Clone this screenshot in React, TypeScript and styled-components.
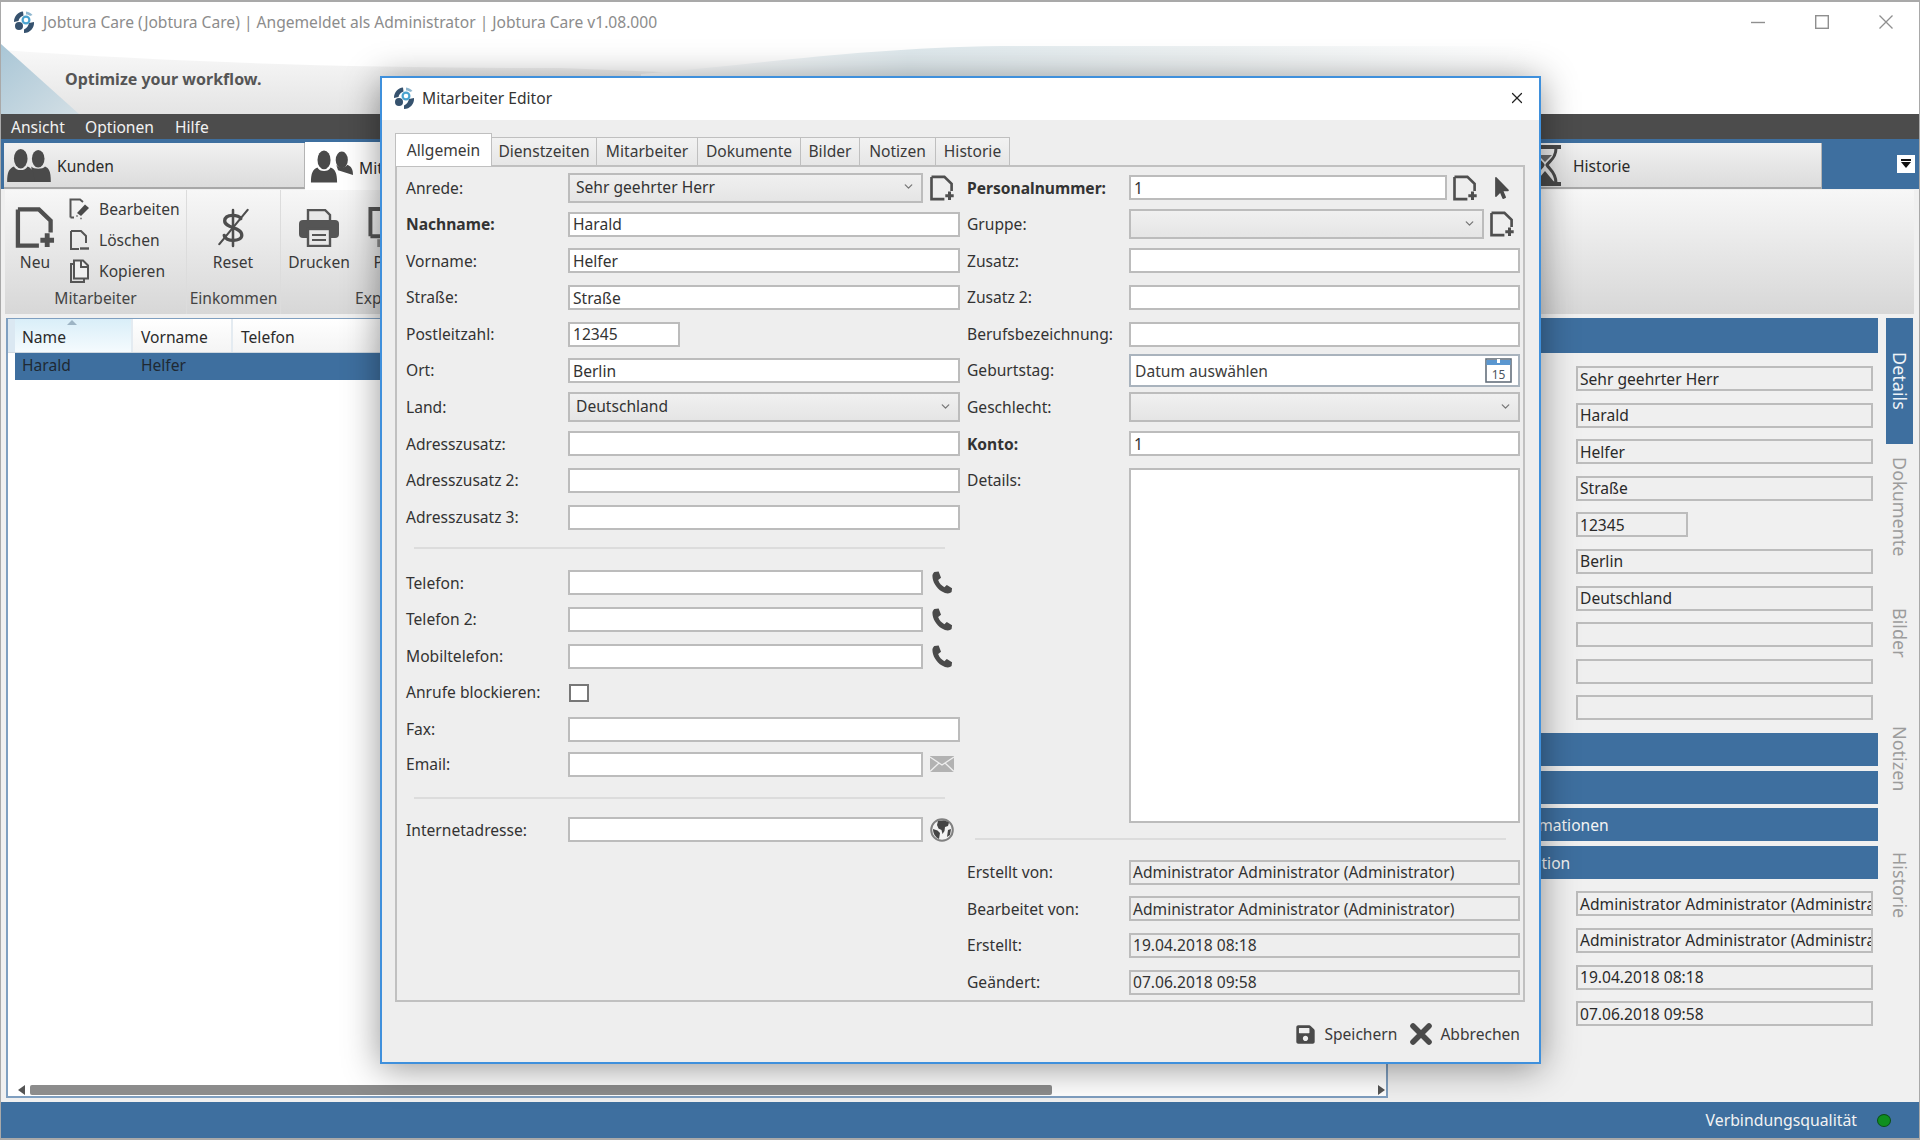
import React from 'react';
import styled, { createGlobalStyle } from 'styled-components';
import { ChevronDown, X } from 'lucide-react';
import { FaSave, FaMousePointer } from 'react-icons/fa';

const BLUE = '#3e6f9f';
const FONT = '"Noto Sans", "Open Sans", sans-serif';

const GlobalStyles = createGlobalStyle`
  html, body { margin: 0; padding: 0; background: #f0f0f0; }
  * { box-sizing: border-box; }
  #root { width: 1920px; height: 1140px; }
`;

const Page = styled.div`
  position: relative;
  width: 1920px;
  height: 1140px;
  overflow: hidden;
  display: flex;
  flex-direction: column;
  background: #f0f0f0;
  border: 1px solid #a9a9a9;
  border-top-width: 2px;
  border-bottom-width: 2px;
  font-family: ${FONT};
  font-size: 15.6px;
  color: #2a2a2a;
`;

/* header */
const Header = styled.header`
  position: relative;
  height: 112px;
  flex: none;
  background: #fff;
`;
const HeaderArt = styled.svg`
  position: absolute;
  inset: 0;
`;
const TitleRow = styled.div`
  position: relative;
  height: 40px;
  display: flex;
  align-items: center;
  padding-left: 11px;
`;
const AppTitle = styled.span`
  margin-left: 7px;
  font-size: 15.6px;
  color: #8c8c8c;
`;
const WindowControls = styled.div`
  margin-left: auto;
  display: flex;
  align-items: center;
  gap: 50px;
  padding-right: 26px;
  color: #8f8f8f;
`;
const Tagline = styled.div`
  position: relative;
  margin: 26px 0 0 64px;
  font-size: 16px;
  font-weight: 700;
  color: #555;
`;

const MenuBar = styled.nav`
  height: 25px;
  flex: none;
  display: flex;
  align-items: center;
  padding-left: 10px;
  background: #4c4c4c;
  color: #f2f2f2;
`;
const MenuItem = styled.span<{ $w: number }>`
  width: ${p => p.$w}px;
`;

/* module tabs */
const ModuleBar = styled.div`
  height: 50px;
  flex: none;
  display: flex;
  padding: 4px 0 0 3px;
  background: ${BLUE};
`;
const ModuleTab = styled.div<{ $active?: boolean; $w?: number; $pad: number; $gap?: number }>`
  width: ${p => (p.$w ? `${p.$w}px` : 'auto')};
  flex: ${p => (p.$w ? 'none' : 1)};
  display: flex;
  align-items: center;
  gap: ${p => p.$gap || 6}px;
  padding-left: ${p => p.$pad}px;
  background: ${p => (p.$active ? '#fff' : 'linear-gradient(#f1f1f1, #dcdcdc)')};
  border-bottom: ${p => (p.$active ? '0' : '2px solid #a8a8a8')};
  border-right: 1px solid #b4b4b4;
  margin-top: ${p => (p.$active ? '-1px' : 0)};
  height: ${p => (p.$active ? '49px' : 'auto')};
`;
const ModuleName = styled.span`
  padding-top: 2px;
`;
const ModuleBlock = styled.div`
  width: 97px;
  flex: none;
  display: flex;
  justify-content: flex-end;
  padding: 12px 4px 0 0;
`;
const FilterButton = styled.div`
  width: 18px;
  height: 18px;
  background: #fff;
  display: flex;
  flex-direction: column;
  align-items: center;
  padding-top: 4px;
`;
const FilterBar = styled.span`
  width: 10px;
  height: 2px;
  background: #111;
  margin-bottom: 1px;
`;
const FilterArrow = styled.span`
  width: 0;
  height: 0;
  border-left: 5.5px solid transparent;
  border-right: 5.5px solid transparent;
  border-top: 6px solid #111;
`;

/* ribbon */
const RibbonWrap = styled.div`
  height: 129px;
  flex: none;
  padding: 1px 5px 4px 4px;
`;
const Ribbon = styled.div`
  height: 100%;
  display: flex;
  background: linear-gradient(#f7f7f7, #d7d7d7);
`;
const RibbonGroup = styled.div<{ $w: number }>`
  width: ${p => p.$w}px;
  flex: none;
  display: flex;
  flex-direction: column;
  border-right: 1px solid #dcdcdc;
`;
const GroupBody = styled.div<{ $pad: number }>`
  height: 91px;
  flex: none;
  display: flex;
  padding-left: ${p => p.$pad}px;
`;
const GroupLabel = styled.div<{ $left?: number }>`
  flex: 1;
  display: flex;
  align-items: center;
  justify-content: ${p => (p.$left ? 'flex-start' : 'center')};
  padding-left: ${p => p.$left || 0}px;
  color: #444;
  white-space: nowrap;
`;
const BigButton = styled.div<{ $w: number }>`
  width: ${p => p.$w}px;
  height: 91px;
  flex: none;
  padding-top: 17px;
  display: flex;
  flex-direction: column;
  align-items: center;
  color: #4a4a4a;
  white-space: nowrap;
`;
const BigIcon = styled.div`
  height: 41px;
  display: flex;
  align-items: center;
  margin-bottom: 4px;
`;
const ButtonText = styled.span`
  color: #3a3a3a;
  line-height: 20px;
`;
const SmallStack = styled.div`
  display: flex;
  flex-direction: column;
  padding-top: 3px;
  margin-left: 14px;
`;
const SmallButton = styled.div`
  height: 31px;
  flex: none;
  display: flex;
  align-items: center;
  gap: 9px;
  color: #4a4a4a;
`;

/* main area */
const Main = styled.main`
  flex: 1;
  min-height: 0;
  display: flex;
  padding: 0 5px 4px 5px;
`;
const TableBox = styled.section`
  width: 1382px;
  flex: none;
  display: flex;
  flex-direction: column;
  background: #fff;
  border: 1px solid #7f9fc0;
  border-width: 1px 2px 2px 2px;
`;
const TableHead = styled.div`
  height: 34px;
  flex: none;
  display: flex;
  border-bottom: 1px solid #cfd8e0;
`;
const RowGutter = styled.div`
  width: 7px;
  flex: none;
  background: #dbe8f2;
`;
const HeadCell = styled.div<{ $w?: number; $sorted?: boolean; $pad: number }>`
  position: relative;
  width: ${p => (p.$w ? `${p.$w}px` : 'auto')};
  flex: ${p => (p.$w ? 'none' : 1)};
  display: flex;
  align-items: center;
  padding: 2px 0 0 ${p => p.$pad}px;
  background: ${p => (p.$sorted ? 'linear-gradient(#d9eef8, #f5fbfe)' : 'linear-gradient(#fff, #f4f4f4)')};
  border-right: ${p => (p.$w ? '2px solid #e4ebf1' : '0')};
`;
const SortCaret = styled.span`
  position: absolute;
  top: 1px;
  left: 52px;
  width: 0;
  height: 0;
  border-left: 5px solid transparent;
  border-right: 5px solid transparent;
  border-bottom: 5px solid #9db4c4;
`;
const SelectedRow = styled.div`
  height: 27px;
  flex: none;
  margin-left: 7px;
  padding-bottom: 3px;
  display: flex;
  align-items: center;
  background: ${BLUE};
  color: #1f2933;
`;
const RowCell = styled.span<{ $w: number; $pad: number }>`
  width: ${p => p.$w}px;
  padding-left: ${p => p.$pad}px;
`;
const TableFill = styled.div`
  flex: 1;
`;
const ScrollBar = styled.div`
  height: 10px;
  flex: none;
  margin-bottom: 1px;
  display: flex;
  align-items: center;
  padding: 0 1px 0 10px;
`;
const ScrollArrow = styled.span<{ $right?: boolean }>`
  width: 0;
  height: 0;
  border-top: 5px solid transparent;
  border-bottom: 5px solid transparent;
  ${p => (p.$right ? 'border-left: 7px solid #555; margin-left: auto;' : 'border-right: 7px solid #555;')}
`;
const ScrollThumb = styled.span`
  width: 1022px;
  height: 10px;
  margin-left: 5px;
  border-radius: 2px;
  background: #8c8c8c;
`;

const DetailPanel = styled.aside`
  flex: 1;
  min-width: 0;
  display: flex;
  padding-left: 5px;
`;
const Accordion = styled.div`
  width: 485px;
  flex: none;
  display: flex;
  flex-direction: column;
`;
const AccBar = styled.div<{ $h?: number; $mt?: number; $pad?: number }>`
  height: ${p => p.$h || 33}px;
  flex: none;
  margin-top: ${p => p.$mt || 0}px;
  padding-left: ${p => p.$pad || 8}px;
  display: flex;
  align-items: center;
  background: ${BLUE};
  color: #f4f4f4;
`;
const ReadStack = styled.div<{ $mt: number; $mb: number }>`
  margin: ${p => p.$mt}px 5px ${p => p.$mb}px 183px;
  display: flex;
  flex-direction: column;
  gap: 11.6px;
`;
const ReadField = styled.div<{ $w?: number }>`
  width: ${p => (p.$w ? `${p.$w}px` : '100%')};
  height: 25px;
  flex: none;
  display: flex;
  align-items: center;
  padding-left: 2px;
  overflow: hidden;
  white-space: nowrap;
  background: #efefef;
  border: 2px solid #bcbcbc;
`;
const SideTabs = styled.div`
  width: 27px;
  flex: none;
  margin-left: 8px;
  display: flex;
  flex-direction: column;
`;
const SideTab = styled.div<{ $active?: boolean }>`
  height: 126px;
  flex: none;
  display: flex;
  align-items: center;
  justify-content: center;
  writing-mode: vertical-rl;
  font-size: 18px;
  color: ${p => (p.$active ? '#eef3f7' : '#9c9c9c')};
  background: ${p => (p.$active ? BLUE : 'transparent')};
`;

const StatusBar = styled.footer`
  height: 36px;
  flex: none;
  display: flex;
  align-items: center;
  justify-content: flex-end;
  gap: 20px;
  padding-right: 28px;
  background: ${BLUE};
  color: #f3f3f3;
  font-size: 15.8px;
`;
const StatusDot = styled.span`
  width: 14px;
  height: 13px;
  border-radius: 50%;
  background: #0f8f1f;
  border: 1px solid #0b4f16;
`;

/* dialog */
const Dialog = styled.div`
  position: absolute;
  left: 379px;
  top: 74px;
  width: 1161px;
  height: 988px;
  display: flex;
  flex-direction: column;
  background: #eee;
  border: 2px solid #3f90dc;
  box-shadow: 0 4px 34px rgba(0, 0, 0, 0.42);
`;
const DialogTitle = styled.div`
  height: 42px;
  flex: none;
  display: flex;
  align-items: center;
  padding: 0 13px 2px 10px;
  background: #fff;
  color: #333;
`;
const DialogName = styled.span`
  margin-left: 6px;
  flex: 1;
`;
const DialogBody = styled.div`
  flex: 1;
  display: flex;
  flex-direction: column;
  padding: 13px 14px 0 13px;
`;
const TabStrip = styled.div`
  height: 33px;
  flex: none;
  display: flex;
  align-items: flex-end;
  position: relative;
  z-index: 1;
`;
const Tab = styled.div<{ $w: number; $active?: boolean }>`
  width: ${p => p.$w}px;
  height: ${p => (p.$active ? 33 : 29)}px;
  flex: none;
  display: flex;
  align-items: center;
  justify-content: center;
  padding-bottom: 1px;
  color: #3a3a3a;
  white-space: nowrap;
  background: ${p => (p.$active ? '#fff' : 'linear-gradient(#f2f2f2, #e6e6e6)')};
  border: 1.5px solid #bfbfbf;
  border-left-width: ${p => (p.$active ? '1.5px' : '0')};
  border-bottom: ${p => (p.$active ? '0' : '1.5px solid #bfbfbf')};
`;
const FormPanel = styled.div`
  height: 837px;
  flex: none;
  margin-top: -1px;
  display: grid;
  grid-template-columns: 561px 553px;
  padding: 2.5px 0 0 9px;
  background: #eee;
  border: 2px solid #c0c0c0;
`;
const FormColumn = styled.div`
  display: flex;
  flex-direction: column;
`;
const Row = styled.div<{ $h?: number; $top?: boolean }>`
  height: ${p => p.$h || 36.6}px;
  flex: none;
  display: flex;
  align-items: ${p => (p.$top ? 'flex-start' : 'center')};
`;
const Label = styled.label<{ $bold?: boolean }>`
  width: 162px;
  flex: none;
  line-height: 36.6px;
  font-weight: ${p => (p.$bold ? 700 : 400)};
  color: #333;
  white-space: nowrap;
`;
const Input = styled.div<{ $w: number }>`
  width: ${p => p.$w}px;
  height: 25px;
  flex: none;
  display: flex;
  align-items: center;
  padding-left: 3px;
  background: #fff;
  border: 2px solid #bcbcbc;
  color: #333;
`;
const Combo = styled.div<{ $w: number }>`
  width: ${p => p.$w}px;
  height: 30px;
  flex: none;
  display: flex;
  align-items: center;
  justify-content: space-between;
  padding: 0 6px 2px 6px;
  background: linear-gradient(#f0f0f0, #e5e5e5);
  border: 2px solid #bcbcbc;
  color: #333;
`;
const DateBox = styled.div<{ $w: number }>`
  width: ${p => p.$w}px;
  height: 33px;
  flex: none;
  display: flex;
  align-items: center;
  justify-content: space-between;
  padding: 0 6px 0 4px;
  background: #fff;
  border: 2px solid #a9b3bd;
  color: #3c3c3c;
`;
const TextArea = styled.div`
  width: 391px;
  height: 355px;
  margin-top: 5.5px;
  background: #fff;
  border: 2px solid #bcbcbc;
`;
const CheckBox = styled.div`
  width: 20px;
  height: 18px;
  margin-left: 1px;
  background: #fff;
  border: 2px solid #777;
`;
const Divider = styled.div<{ $mt: number; $mb: number }>`
  width: 531px;
  height: 2px;
  flex: none;
  margin: ${p => p.$mt}px 0 ${p => p.$mb}px 8px;
  background: #dcdcdc;
`;
const TrailIcon = styled.span<{ $ml: number; $color?: string }>`
  display: flex;
  margin-left: ${p => p.$ml}px;
  color: ${p => p.$color || '#4a4a4a'};
`;
const ReadOnly = styled.div`
  width: 391px;
  height: 25px;
  flex: none;
  display: flex;
  align-items: center;
  padding-left: 2px;
  background: #eee;
  border: 2px solid #bcbcbc;
  color: #333;
`;
const DialogActions = styled.div`
  flex: 1;
  display: flex;
  align-items: center;
  justify-content: flex-end;
  gap: 13px;
  padding: 4px 5px 0 0;
`;
const ActionButton = styled.div`
  display: flex;
  align-items: center;
  gap: 8px;
  color: #3a3a3a;
`;

/* drawn icons */
const Logo = ({ size = 24 }: { size?: number }) => (
  <svg width={size} height={size} viewBox="0 0 24 24">
    <path d="M2 12 C2 6 6 2 11 1.5 L11.5 5.5 C8.5 6.5 7 8.5 6.5 11 Z" fill="#36526e" />
    <circle cx="7" cy="16" r="4" fill="#36526e" />
    <path d="M22 12 C22.5 18 18 23 12 23 L12 19.5 C15 18 16.5 15.5 17 13 Z" fill="#36526e" />
    <path d="M14 1.5 C17 2 19 3 20.5 5 L18 6 C17 5 16 4.5 14 4.5 Z" fill="#8fb7cf" />
    <circle cx="14" cy="10" r="3.4" fill="none" stroke="#4aa3cf" strokeWidth="2.2" />
  </svg>
);

const NewDoc = ({ w, h }: { w: number; h: number }) => (
  <svg width={w} height={h} viewBox="0 0 40 42" fill="none" stroke="#4f4f4f">
    <path d="M2.5 2.5 H24 L36 14 V26 M2.5 2.5 V39.5 H24" strokeWidth="4.4" />
    <path d="M32.5 27 V41 M25.5 34 H39.5" strokeWidth="5" />
  </svg>
);

const EditDoc = () => (
  <svg width="21" height="22" viewBox="0 0 21 22" fill="none">
    <path d="M1.5 19.5 V1.5 H11 L14 4" stroke="#555" strokeWidth="2" />
    <path d="M1.5 19.5 H5" stroke="#555" strokeWidth="2" />
    <path d="M8 15 L16 6.5 L20 10 L12 18 Z" fill="#4a4a4a" />
    <path d="M7 18 h2 M11 20.5 h2" stroke="#888" strokeWidth="1.5" />
  </svg>
);

const DeleteDoc = () => (
  <svg width="21" height="22" viewBox="0 0 21 22" fill="none">
    <path d="M2 2 H12 L17 7 V14 M2 2 V20 H10" stroke="#555" strokeWidth="2" />
    <path d="M11 19.5 H20" stroke="#555" strokeWidth="2.4" />
  </svg>
);

const CopyDoc = () => (
  <svg width="21" height="24" viewBox="0 0 21 24" fill="none" stroke="#555" strokeWidth="2">
    <path d="M4.5 5 H2 V23 H15 V20" />
    <path d="M5 1.5 H14 L19 6.5 V19.5 H5 Z" fill="#f0f0f0" />
    <path d="M12 2 V8 H18" />
  </svg>
);

const DollarOff = () => (
  <svg width="32" height="41" viewBox="0 0 32 42" fill="none" stroke="#4d4d4d" strokeLinecap="round">
    <path d="M24 12 C23 8 8 6 7.5 14 C7 22 25 20 25 29 C25 36 8 36 7 29" strokeWidth="3.4" />
    <path d="M16 3 V40" strokeWidth="2.6" />
    <path d="M31 3 L2 38" strokeWidth="2.2" />
  </svg>
);

const Printer = () => (
  <svg width="40" height="38" viewBox="0 0 40 38">
    <path d="M9 1 H26 L31 6 V13 H9 Z" fill="#e8e8e8" stroke="#555" strokeWidth="2.4" />
    <rect x="0" y="11" width="40" height="18" rx="4" fill="#555" />
    <rect x="9" y="20" width="22" height="17" fill="#e8e8e8" stroke="#555" strokeWidth="2.4" />
    <path d="M13 26 H27 M13 31 H27" stroke="#555" strokeWidth="2" />
  </svg>
);

const PageP = () => (
  <svg width="40" height="41" viewBox="0 0 40 42" fill="none">
    <path d="M2 30 V2 H38 V30 H2" stroke="#555" strokeWidth="4" />
    <rect x="9" y="33" width="12" height="8" fill="#8a8a8a" />
  </svg>
);

const People = ({ w, h, even }: { w: number; h: number; even?: boolean }) => (
  <svg width={w} height={h} viewBox="0 0 46 34" fill="#4a4a4a">
    <ellipse cx={even ? 33 : 34} cy="10" rx="6.5" ry="9" />
    <path d={even ? 'M26 18 C28 21 38 21 40 18 C44 20 46 22 46 34 H26 Z' : 'M28 15 C30 19 38 19 40 15 C44 17 46 19 46 26 L30 21 Z'} />
    <ellipse cx="15" cy="10" rx="7" ry="10" />
    <path d="M8 18 C10 23 20 23 22 18 C27 20 29 24 29 34 H1 C1 24 3 20 8 18 Z" />
  </svg>
);

const Hourglass = () => (
  <svg width="34" height="41" viewBox="0 0 34 41" fill="none">
    <path d="M1 2 H33 M1 39 H33" stroke="#4a4a4a" strokeWidth="4" />
    <path d="M6 3 C6 14 13 16 15 20 C13 24 6 27 6 38 H28 C28 27 21 24 19 20 C21 16 28 14 28 3" stroke="#4a4a4a" strokeWidth="3" />
    <path d="M17 26 L27 38 H7 Z" fill="#4a4a4a" />
    <path d="M10 10 H24 L17 17 Z" fill="#6a6a6a" />
  </svg>
);

const CalendarIcon = () => (
  <svg width="27" height="25" viewBox="0 0 27 25">
    <rect x="1" y="1" width="25" height="23" fill="#fff" stroke="#64707c" strokeWidth="1.6" />
    <rect x="1.5" y="2" width="24" height="5" fill="#5b97d0" />
    <rect x="12" y="1" width="3" height="4" fill="#fff" />
    <text x="13.5" y="20.5" textAnchor="middle" fontSize="12" fontFamily="Noto Sans" fill="#4a5560">15</text>
  </svg>
);

const PhoneIcon = () => (
  <svg width="22" height="23" viewBox="0 0 22 24" fill="#4a4a4a">
    <path d="M3 1 L7.5 0.5 L10 7 L7 9.5 C8 12.5 10.5 15.5 13.5 17 L16 14.5 L21.5 18 L21 22 C19 24 15 24 11 21.5 C5 18 1 11 1 5 C1 3.5 2 2 3 1 Z" />
  </svg>
);

const MailIcon = () => (
  <svg width="24" height="16" viewBox="0 0 24 16">
    <rect width="24" height="16" fill="#b2b2b2" />
    <path d="M0 1 L12 9 L24 1 M0 15.5 L9 7 M24 15.5 L15 7" fill="none" stroke="#eee" strokeWidth="1.3" />
  </svg>
);

const GlobeIcon = () => (
  <svg width="24" height="24" viewBox="0 0 24 24">
    <circle cx="12" cy="12" r="10.8" fill="#f2f2f2" stroke="#808080" strokeWidth="2" />
    <path d="M8 3 C11 2 16 2 19 4.5 L18 8 L15 9 L14.5 13 L12.5 16 L11.5 12 L8.5 10.5 L7 7 Z" fill="#444" />
    <path d="M3 11 L7.5 12.5 L10 15 L9 21 C5.5 19.5 3 15.5 3 11 Z" fill="#444" />
    <path d="M18 12 L21 11 L20 17 L17 19 Z" fill="#444" />
  </svg>
);

const CancelIcon = () => (
  <svg width="22" height="22" viewBox="0 0 22 22">
    <path d="M3 3 L19 19 M19 3 L3 19" stroke="#4a4a4a" strokeWidth="5.6" strokeLinecap="round" />
  </svg>
);

const HeaderDecoration = () => (
  <HeaderArt width="1918" height="112" viewBox="0 0 1918 112">
    <defs>
      <linearGradient id="sweep" x1="0" y1="0" x2="0" y2="1">
        <stop offset="0" stopColor="#f8f8f8" />
        <stop offset="1" stopColor="#e4e4e4" />
      </linearGradient>
      <linearGradient id="teal" x1="0" y1="0" x2="1" y2="0">
        <stop offset="0" stopColor="#fff" />
        <stop offset="0.3" stopColor="#dfe9ed" />
        <stop offset="0.65" stopColor="#eef2f3" />
        <stop offset="1" stopColor="#fff" />
      </linearGradient>
      <linearGradient id="tri" x1="0" y1="0" x2="1" y2="1">
        <stop offset="0" stopColor="#a9c6d6" />
        <stop offset="1" stopColor="#d3dfe5" />
      </linearGradient>
    </defs>
    <path d="M0 48 C200 62 380 66 560 66 L760 74 L760 112 L0 112 Z" fill="url(#sweep)" />
    <path d="M640 72 C760 62 860 46 1000 44 L1530 44 L1530 80 L640 80 Z" fill="url(#teal)" />
    <path d="M0 42 L78 112 L0 112 Z" fill="url(#tri)" />
  </HeaderArt>
);

const Chevron = () => <ChevronDown size={13} strokeWidth={2.4} color="#777" />;

const PhoneRow = ({ label }: { label: string }) => (
  <Row>
    <Label>{label}</Label>
    <Input $w={355} />
    <TrailIcon $ml={8}><PhoneIcon /></TrailIcon>
  </Row>
);

const TextRow = ({ label, value, bold }: { label: string; value?: string; bold?: boolean }) => (
  <Row>
    <Label $bold={bold}>{label}</Label>
    <Input $w={392}>{value}</Input>
  </Row>
);

const RightTextRow = ({ label, value, bold }: { label: string; value?: string; bold?: boolean }) => (
  <Row>
    <Label $bold={bold}>{label}</Label>
    <Input $w={391}>{value}</Input>
  </Row>
);

const InfoRow = ({ label, value }: { label: string; value: string }) => (
  <Row>
    <Label>{label}</Label>
    <ReadOnly>{value}</ReadOnly>
  </Row>
);

export default function App() {
  return (
    <Page>
      <GlobalStyles />
      <Header>
        <HeaderDecoration />
        <TitleRow>
          <Logo />
          <AppTitle>Jobtura Care (Jobtura Care) | Angemeldet als Administrator | Jobtura Care v1.08.000</AppTitle>
          <WindowControls>
            <svg width="14" height="14" viewBox="0 0 14 14"><path d="M0 7.5 H14" stroke="currentColor" strokeWidth="1.4" /></svg>
            <svg width="14" height="14" viewBox="0 0 14 14" fill="none"><rect x="0.7" y="0.7" width="12.6" height="12.6" stroke="currentColor" strokeWidth="1.4" /></svg>
            <svg width="14" height="14" viewBox="0 0 14 14"><path d="M0.5 0.5 L13.5 13.5 M13.5 0.5 L0.5 13.5" stroke="currentColor" strokeWidth="1.3" /></svg>
          </WindowControls>
        </TitleRow>
        <Tagline>Optimize your workflow.</Tagline>
      </Header>

      <MenuBar>
        <MenuItem $w={74}>Ansicht</MenuItem>
        <MenuItem $w={90}>Optionen</MenuItem>
        <MenuItem $w={50}>Hilfe</MenuItem>
      </MenuBar>

      <ModuleBar>
        <ModuleTab $w={301} $pad={2}>
          <People w={45} h={33} even />
          <ModuleName>Kunden</ModuleName>
        </ModuleTab>
        <ModuleTab $w={303} $pad={5} $active>
          <People w={43} h={33} />
          <ModuleName>Mitarbeiter</ModuleName>
        </ModuleTab>
        <ModuleTab $pad={0} />
        <ModuleTab $w={303} $pad={9} $gap={11}>
          <Hourglass />
          <ModuleName>Historie</ModuleName>
        </ModuleTab>
        <ModuleBlock>
          <FilterButton>
            <FilterBar />
            <FilterArrow />
          </FilterButton>
        </ModuleBlock>
      </ModuleBar>

      <RibbonWrap>
        <Ribbon>
          <RibbonGroup $w={182}>
            <GroupBody $pad={10}>
              <BigButton $w={40}>
                <BigIcon><NewDoc w={40} h={41} /></BigIcon>
                <ButtonText>Neu</ButtonText>
              </BigButton>
              <SmallStack>
                <SmallButton><EditDoc /><ButtonText>Bearbeiten</ButtonText></SmallButton>
                <SmallButton><DeleteDoc /><ButtonText>Löschen</ButtonText></SmallButton>
                <SmallButton><CopyDoc /><ButtonText>Kopieren</ButtonText></SmallButton>
              </SmallStack>
            </GroupBody>
            <GroupLabel>Mitarbeiter</GroupLabel>
          </RibbonGroup>
          <RibbonGroup $w={94}>
            <GroupBody $pad={0}>
              <BigButton $w={92}>
                <BigIcon><DollarOff /></BigIcon>
                <ButtonText>Reset</ButtonText>
              </BigButton>
            </GroupBody>
            <GroupLabel>Einkommen</GroupLabel>
          </RibbonGroup>
          <RibbonGroup $w={200}>
            <GroupBody $pad={0}>
              <BigButton $w={76}>
                <BigIcon><Printer /></BigIcon>
                <ButtonText>Drucken</ButtonText>
              </BigButton>
              <BigButton $w={62}>
                <BigIcon><PageP /></BigIcon>
                <ButtonText>PDF</ButtonText>
              </BigButton>
            </GroupBody>
            <GroupLabel $left={74}>Export</GroupLabel>
          </RibbonGroup>
        </Ribbon>
      </RibbonWrap>

      <Main>
        <TableBox>
          <TableHead>
            <RowGutter />
            <HeadCell $w={118} $pad={7} $sorted>
              <SortCaret />
              Name
            </HeadCell>
            <HeadCell $w={100} $pad={8}>Vorname</HeadCell>
            <HeadCell $pad={8}>Telefon</HeadCell>
          </TableHead>
          <SelectedRow>
            <RowCell $w={118} $pad={7}>Harald</RowCell>
            <RowCell $w={100} $pad={8}>Helfer</RowCell>
          </SelectedRow>
          <TableFill />
          <ScrollBar>
            <ScrollArrow />
            <ScrollThumb />
            <ScrollArrow $right />
          </ScrollBar>
        </TableBox>

        <DetailPanel>
          <Accordion>
            <AccBar $h={35} />
            <ReadStack $mt={13} $mb={13}>
              <ReadField>Sehr geehrter Herr</ReadField>
              <ReadField>Harald</ReadField>
              <ReadField>Helfer</ReadField>
              <ReadField>Straße</ReadField>
              <ReadField $w={112}>12345</ReadField>
              <ReadField>Berlin</ReadField>
              <ReadField>Deutschland</ReadField>
              <ReadField />
              <ReadField />
              <ReadField />
            </ReadStack>
            <AccBar />
            <AccBar $mt={5} />
            <AccBar $mt={4} $pad={109}>Informationen</AccBar>
            <AccBar $mt={5} $pad={89}>Information</AccBar>
            <ReadStack $mt={12} $mb={0}>
              <ReadField>Administrator Administrator (Administrator)</ReadField>
              <ReadField>Administrator Administrator (Administrator)</ReadField>
              <ReadField>19.04.2018 08:18</ReadField>
              <ReadField>07.06.2018 09:58</ReadField>
            </ReadStack>
          </Accordion>
          <SideTabs>
            <SideTab $active>Details</SideTab>
            <SideTab>Dokumente</SideTab>
            <SideTab>Bilder</SideTab>
            <SideTab>Notizen</SideTab>
            <SideTab>Historie</SideTab>
          </SideTabs>
        </DetailPanel>
      </Main>

      <StatusBar>
        <span>Verbindungsqualität</span>
        <StatusDot />
      </StatusBar>

      <Dialog>
        <DialogTitle>
          <Logo />
          <DialogName>Mitarbeiter Editor</DialogName>
          <X size={18} strokeWidth={1.6} color="#222" />
        </DialogTitle>
        <DialogBody>
          <TabStrip>
            <Tab $w={97} $active>Allgemein</Tab>
            <Tab $w={105}>Dienstzeiten</Tab>
            <Tab $w={101}>Mitarbeiter</Tab>
            <Tab $w={103}>Dokumente</Tab>
            <Tab $w={59}>Bilder</Tab>
            <Tab $w={76}>Notizen</Tab>
            <Tab $w={74}>Historie</Tab>
          </TabStrip>
          <FormPanel>
            <FormColumn>
              <Row>
                <Label>Anrede:</Label>
                <Combo $w={355}>Sehr geehrter Herr<Chevron /></Combo>
                <TrailIcon $ml={7}><NewDoc w={24} h={26} /></TrailIcon>
              </Row>
              <TextRow label="Nachname:" value="Harald" bold />
              <TextRow label="Vorname:" value="Helfer" />
              <TextRow label="Straße:" value="Straße" />
              <Row>
                <Label>Postleitzahl:</Label>
                <Input $w={112}>12345</Input>
              </Row>
              <TextRow label="Ort:" value="Berlin" />
              <Row>
                <Label>Land:</Label>
                <Combo $w={392}>Deutschland<Chevron /></Combo>
              </Row>
              <TextRow label="Adresszusatz:" />
              <TextRow label="Adresszusatz 2:" />
              <TextRow label="Adresszusatz 3:" />
              <Divider $mt={11.5} $mb={15.7} />
              <PhoneRow label="Telefon:" />
              <PhoneRow label="Telefon 2:" />
              <PhoneRow label="Mobiltelefon:" />
              <Row>
                <Label>Anrufe blockieren:</Label>
                <CheckBox />
              </Row>
              <TextRow label="Fax:" />
              <Row $h={33}>
                <Label>Email:</Label>
                <Input $w={355} />
                <TrailIcon $ml={7}><MailIcon /></TrailIcon>
              </Row>
              <Divider $mt={16} $mb={13} />
              <Row>
                <Label>Internetadresse:</Label>
                <Input $w={355} />
                <TrailIcon $ml={7}><GlobeIcon /></TrailIcon>
              </Row>
            </FormColumn>
            <FormColumn>
              <Row>
                <Label $bold>Personalnummer:</Label>
                <Input $w={318}>1</Input>
                <TrailIcon $ml={6}><NewDoc w={24} h={26} /></TrailIcon>
                <TrailIcon $ml={14}><FaMousePointer size={22} /></TrailIcon>
              </Row>
              <Row>
                <Label>Gruppe:</Label>
                <Combo $w={355}><span /><Chevron /></Combo>
                <TrailIcon $ml={6}><NewDoc w={24} h={26} /></TrailIcon>
              </Row>
              <RightTextRow label="Zusatz:" />
              <RightTextRow label="Zusatz 2:" />
              <RightTextRow label="Berufsbezeichnung:" />
              <Row>
                <Label>Geburtstag:</Label>
                <DateBox $w={391}>Datum auswählen<CalendarIcon /></DateBox>
              </Row>
              <Row>
                <Label>Geschlecht:</Label>
                <Combo $w={391}><span /><Chevron /></Combo>
              </Row>
              <RightTextRow label="Konto:" value="1" bold />
              <Row $h={360.5} $top>
                <Label>Details:</Label>
                <TextArea />
              </Row>
              <Divider $mt={15.5} $mb={13.7} />
              <InfoRow label="Erstellt von:" value="Administrator Administrator (Administrator)" />
              <InfoRow label="Bearbeitet von:" value="Administrator Administrator (Administrator)" />
              <InfoRow label="Erstellt:" value="19.04.2018 08:18" />
              <InfoRow label="Geändert:" value="07.06.2018 09:58" />
            </FormColumn>
          </FormPanel>
          <DialogActions>
            <ActionButton><FaSave size={21} color="#4a4a4a" />Speichern</ActionButton>
            <ActionButton><CancelIcon />Abbrechen</ActionButton>
          </DialogActions>
        </DialogBody>
      </Dialog>
    </Page>
  );
}
